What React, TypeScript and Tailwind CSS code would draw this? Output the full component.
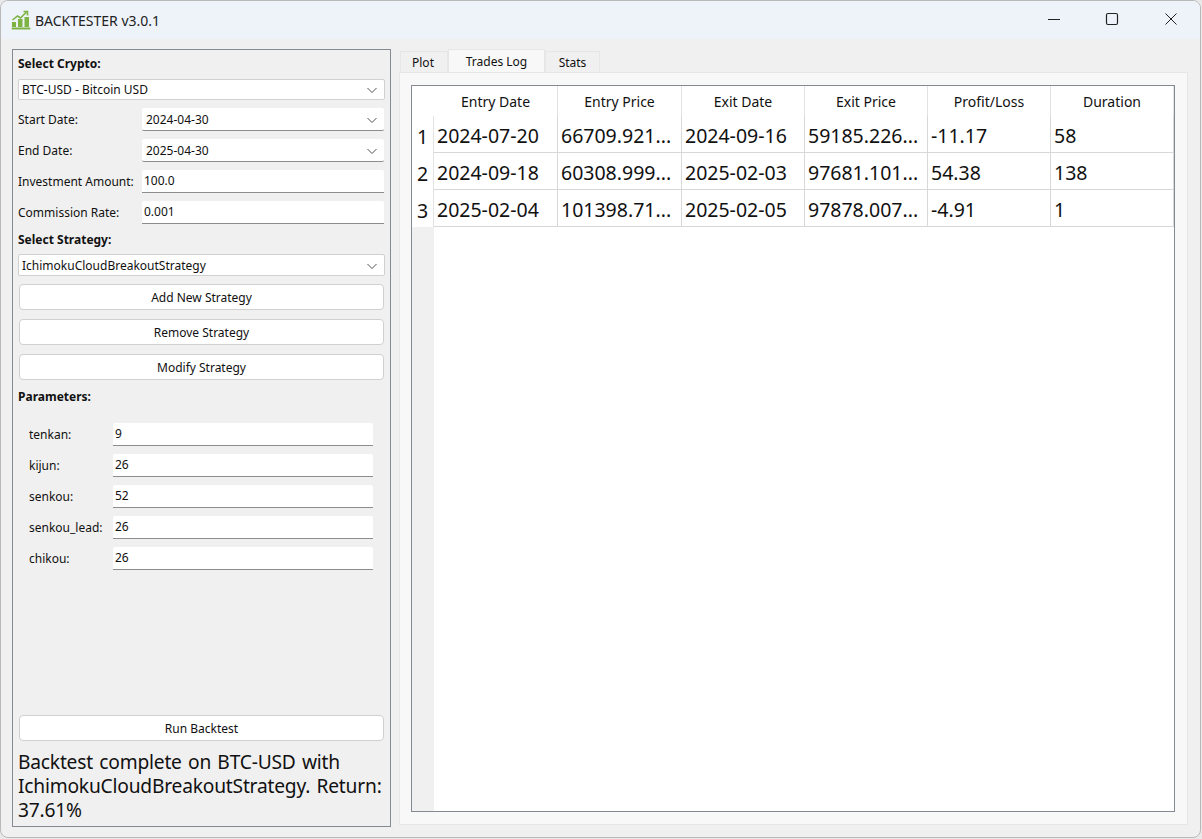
const font = { fontFamily: '"Noto Sans", "Open Sans", sans-serif' };

const columns = ['Entry Date', 'Entry Price', 'Exit Date', 'Exit Price', 'Profit/Loss', 'Duration'];
const columnWidths = ['w-[124px]', 'w-[124px]', 'w-[123px]', 'w-[123px]', 'w-[123px]', 'w-[123px]'];

const trades = [
  ['2024-07-20', '66709.921...', '2024-09-16', '59185.226...', '-11.17', '58'],
  ['2024-09-18', '60308.999...', '2025-02-03', '97681.101...', '54.38', '138'],
  ['2025-02-04', '101398.71...', '2025-02-05', '97878.007...', '-4.91', '1'],
];

const params = [
  ['tenkan:', '9'],
  ['kijun:', '26'],
  ['senkou:', '52'],
  ['senkou_lead:', '26'],
  ['chikou:', '26'],
];

function Chevron() {
  return (
    <svg width="12" height="12" viewBox="0 0 12 12" className="shrink-0">
      <path d="M1.5 4l4.5 4.5L10.5 4" fill="none" stroke="#555" strokeWidth="1" />
    </svg>
  );
}

function Combo({ value, className }: { value: string; className: string }) {
  return (
    <div className={`flex items-center justify-between rounded-[2px] bg-white pr-[6px] ${className}`}>
      <span>{value}</span>
      <Chevron />
    </div>
  );
}

function Field({ value, className }: { value: string; className: string }) {
  return (
    <div className={`flex items-center rounded-t-[2px] border-b border-[#8d8d8d] bg-white pl-[2px] ${className}`}>
      {value}
    </div>
  );
}

function PushButton({ label, className = '' }: { label: string; className?: string }) {
  return (
    <button className={`mx-[1px] flex h-[26px] w-[365px] items-center justify-center rounded-[4px] border border-[#d0d0d0] bg-white pt-[2px] text-[12px] text-[#111] ${className}`}>
      {label}
    </button>
  );
}

function Sidebar() {
  return (
    <aside className="flex h-[778px] w-[379px] shrink-0 flex-col border border-[#858a92] px-[5px] text-[12px] text-[#111]">
      <div className="mt-[6px] flex h-[16px] items-center font-bold">Select Crypto:</div>
      <Combo value="BTC-USD - Bitcoin USD" className="mt-[7px] h-[21px] w-[367px] border border-[#d0d0d0] pl-[3px]" />
      <div className="mt-[8px] flex h-[23px] items-center">
        <span className="w-[124px]">Start Date:</span>
        <Combo value="2024-04-30" className="h-[23px] w-[242px] border-b border-[#8d8d8d] pl-[4px] pt-[2px]" />
      </div>
      <div className="mt-[8px] flex h-[23px] items-center">
        <span className="w-[124px]">End Date:</span>
        <Combo value="2025-04-30" className="h-[23px] w-[242px] border-b border-[#8d8d8d] pl-[4px] pt-[2px]" />
      </div>
      <div className="mt-[8px] flex h-[23px] items-center">
        <span className="w-[124px]">Investment Amount:</span>
        <Field value="100.0" className="h-[23px] w-[242px]" />
      </div>
      <div className="mt-[8px] flex h-[23px] items-center">
        <span className="w-[124px]">Commission Rate:</span>
        <Field value="0.001" className="h-[23px] w-[242px]" />
      </div>
      <div className="mt-[7px] flex h-[17px] items-center font-bold">Select Strategy:</div>
      <Combo value="IchimokuCloudBreakoutStrategy" className="mt-[6px] h-[22px] w-[367px] border border-[#d0d0d0] pl-[3px] pt-[2px]" />
      <PushButton label="Add New Strategy" className="mt-[8px]" />
      <PushButton label="Remove Strategy" className="mt-[9px]" />
      <PushButton label="Modify Strategy" className="mt-[9px]" />
      <div className="mt-[8px] flex h-[16px] items-center pt-[2px] font-bold">Parameters:</div>
      <div className="mt-[19px] flex flex-col gap-[8px] pl-[11px]">
        {params.map(([name, value]) => (
          <div key={name} className="flex h-[23px] items-center">
            <span className="w-[84px]">{name}</span>
            <Field value={value} className="h-[23px] w-[260px]" />
          </div>
        ))}
      </div>
      <PushButton label="Run Backtest" className="mt-[145px]" />
      <p className="mt-[9px] w-[368px] text-[19.2px] leading-[24px] tracking-[-0.2px] text-[#111] [word-spacing:1.5px]">
        Backtest complete on BTC-USD with IchimokuCloudBreakoutStrategy. Return: 37.61%
      </p>
    </aside>
  );
}

function Tabs() {
  return (
    <div className="flex h-[23px] items-end pl-[1px] text-[12px] text-[#111]">
      <div className="flex h-[21px] w-[48px] items-center justify-center border border-b-0 border-[#e6e6e6] bg-[#f0f0f0] pr-[2px] pt-[2px]">Plot</div>
      <div className="flex h-[23px] w-[97px] items-center justify-center border border-b-0 border-[#e6e6e6] bg-[#f8f8f8] pt-[2px]">Trades Log</div>
      <div className="flex h-[21px] w-[55px] items-center justify-center border border-b-0 border-[#e6e6e6] bg-[#f0f0f0] pt-[2px]">Stats</div>
    </div>
  );
}

function TradesTable() {
  return (
    <div className="flex h-[727px] w-[764px] border border-[#858a92] bg-white">
      <div className="flex w-[22px] shrink-0 flex-col">
        <div className="h-[30px] bg-white" />
        {[1, 2, 3].map((n) => (
          <div key={n} className="flex h-[37px] items-center justify-center border-r border-[#e3e3e3] pt-[5px] text-[19.5px] text-[#111]">{n}</div>
        ))}
        <div className="flex-1 bg-[#f0f0f0]" />
      </div>
      <div className="flex-1">
        <div className="flex h-[30px]">
          {columns.map((col, i) => (
            <div key={col} className={`flex items-center justify-center border-r border-[#e3e3e3] pt-[1px] text-[14px] text-[#111] ${columnWidths[i]}`}>
              {col}
            </div>
          ))}
        </div>
        {trades.map((row) => (
          <div key={row[0]} className="flex h-[37px]">
            {row.map((cell, i) => (
              <div key={i} className={`flex items-center border-r border-b border-[#d8d8d8] pl-[3px] pt-[4px] text-[19.5px] whitespace-nowrap text-[#111] ${columnWidths[i]}`}>
                {cell}
              </div>
            ))}
          </div>
        ))}
      </div>
    </div>
  );
}

function TitleBar() {
  return (
    <header className="flex h-[38px] shrink-0 items-center bg-[#eef3fa]">
      <svg width="20" height="20" viewBox="0 0 20 20" className="ml-[10px]">
        <rect x="1" y="12" width="4" height="5" fill="#7cb342" />
        <rect x="7" y="9" width="4.5" height="8" fill="#7cb342" />
        <rect x="13.5" y="7" width="4.5" height="10" fill="#7cb342" />
        <rect x="0.5" y="17.5" width="19" height="2" rx="1" fill="#7cb342" />
        <path d="M1.5 10l5-4 3 2 6-6" fill="none" stroke="#7cb342" strokeWidth="1.6" />
        <path d="M12.5 1.5h4v4" fill="none" stroke="#7cb342" strokeWidth="1.6" />
      </svg>
      <span className="ml-[4px] text-[14px] text-[#222]">BACKTESTER v3.0.1</span>
      <div className="ml-auto flex items-center pb-[2px]">
        <svg width="14" height="14" viewBox="0 0 14 14" className="mr-[44px]">
          <path d="M1 7.5h12" stroke="#222" strokeWidth="1" />
        </svg>
        <svg width="14" height="14" viewBox="0 0 14 14" className="mr-[45px]">
          <rect x="1.5" y="1.5" width="11" height="11" rx="1.5" fill="none" stroke="#222" strokeWidth="1.2" />
        </svg>
        <svg width="14" height="14" viewBox="0 0 14 14" className="mr-[22px]">
          <path d="M1.5 1.5l11 11M12.5 1.5l-11 11" stroke="#222" strokeWidth="1" />
        </svg>
      </div>
    </header>
  );
}

export default function App() {
  return (
    <div style={font} className="h-[839px] w-[1202px] overflow-hidden bg-[#e9e9e9]">
      <div className="flex h-[838px] w-[1201px] flex-col overflow-hidden rounded-[8px] border border-[#b9b9b9] bg-[#f0f0f0]">
        <TitleBar />
        <main className="flex pl-[11px] pt-[10px]">
          <Sidebar />
          <section className="ml-[8px] flex flex-col">
            <Tabs />
            <div className="h-[753px] w-[789px] border border-[#e6e6e6] bg-[#f8f8f8] pl-[11px] pt-[12px]">
              <TradesTable />
            </div>
          </section>
        </main>
      </div>
    </div>
  );
}
